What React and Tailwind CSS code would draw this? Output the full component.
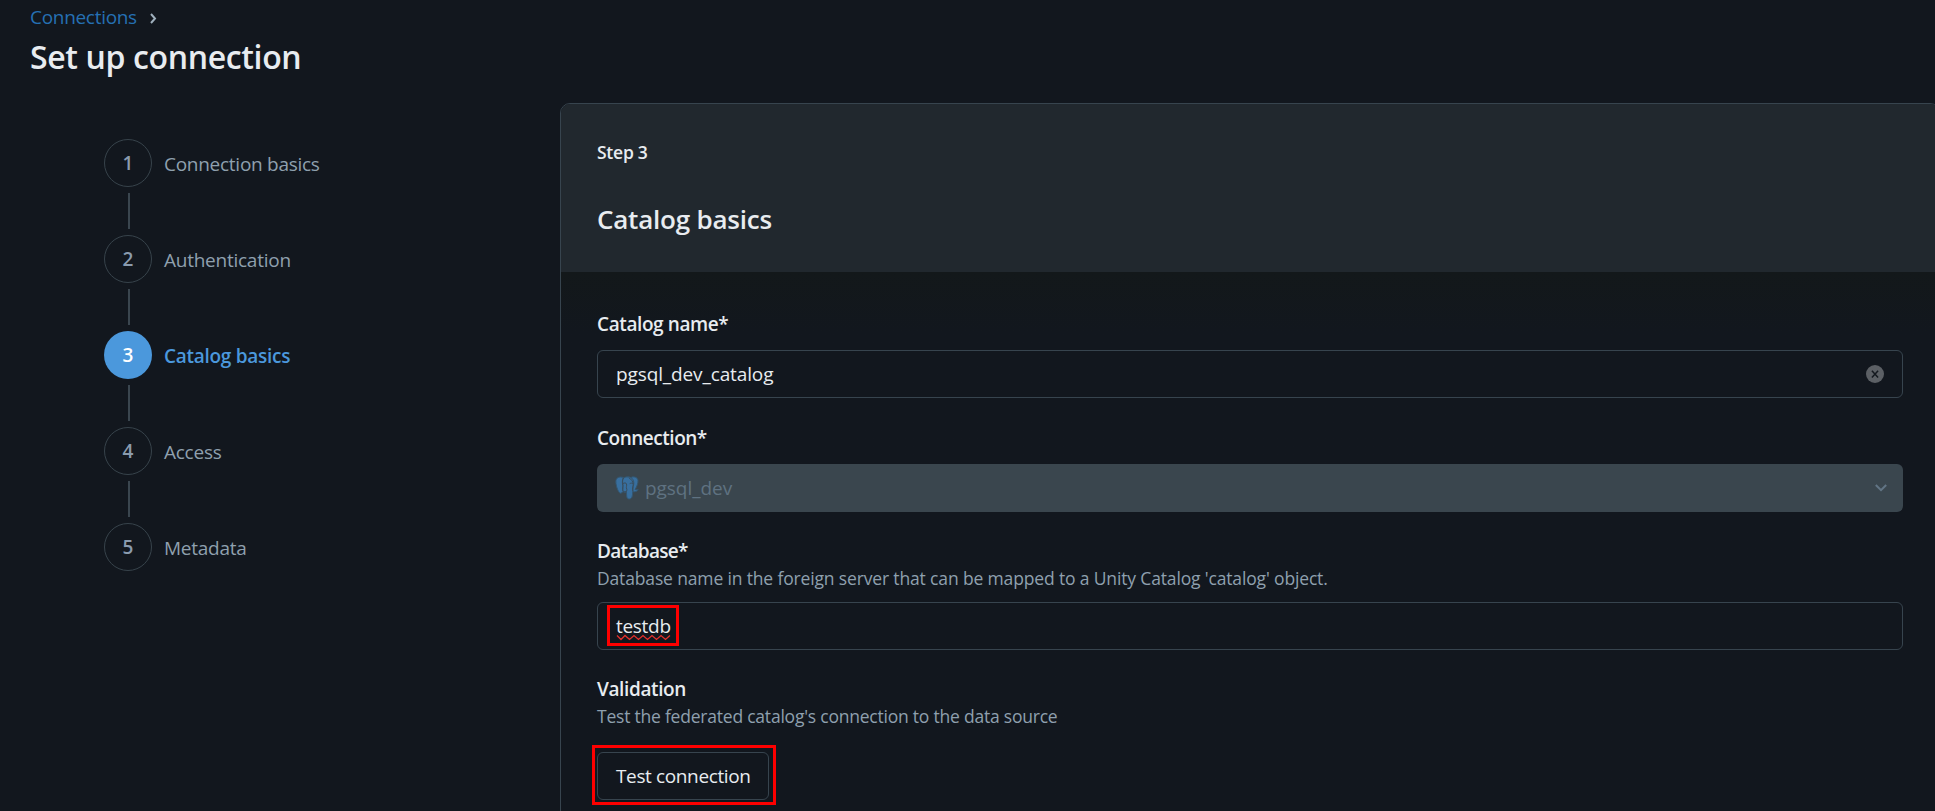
import { Fragment } from "react";

const steps = [
  { label: "Connection basics", tracking: "tracking-[-0.27px]" },
  { label: "Authentication", tracking: "tracking-[-0.25px]" },
  { label: "Catalog basics", tracking: "tracking-[-0.27px]", active: true },
  { label: "Access", tracking: "tracking-[-0.25px]" },
  { label: "Metadata", tracking: "tracking-[-0.26px]" },
];

function Stepper() {
  return (
    <nav className="ml-[74px] mt-[36px] flex w-[456px] shrink-0 flex-col">
      {steps.map((s, i) => (
        <Fragment key={s.label}>
          {i > 0 && <div className="my-1.5 ml-6 h-9 w-0.5 bg-[#3a464f]" />}
          <div className="flex h-12 items-center gap-3">
            <div
              className={
                s.active
                  ? "flex size-12 items-center justify-center rounded-full bg-[#4b98dc] pt-px font-semibold text-white"
                  : "flex size-12 items-center justify-center rounded-full border border-[#37434b] pt-px font-semibold text-[#8a9bae]"
              }
            >
              {i + 1}
            </div>
            <span className={`pt-0.5 ${s.tracking} ${s.active ? "font-semibold text-[#4b98dc]" : "text-[#8fa0ae]"}`}>
              {s.label}
            </span>
          </div>
        </Fragment>
      ))}
    </nav>
  );
}

function ClearIcon() {
  return (
    <svg width="18" height="18" viewBox="0 0 18 18">
      <circle cx="9" cy="9" r="9" fill="#5c6065" />
      <path d="M5.9 5.7l6.2 6.8M12.1 5.7l-6.2 6.8" stroke="#14191f" strokeWidth="1.5" />
    </svg>
  );
}

function ElephantIcon() {
  return (
    <svg width="24" height="24" viewBox="0 0 24 24" strokeLinejoin="round" strokeLinecap="round">
      <g fill="#386f9f" stroke="#34566f" strokeWidth="1">
        <path d="M16.5 1.2C19 .2 22.6 1.4 23 4.2c.3 3-1.300 6.800-3 9.300 1 .5 2.500.1 3.300.1-.8 1.900-3.600 2.700-5.400 2.100z" />
        <path d="M8.300 1.500C5.500.2 1.500.9.9 4.600c-.5 3.200 1.400 9.500 3.400 12 1.200 1.400 2.500.5 3.600-1l1.600.3L11 5z" />
        <path d="M8.300 2.200C10.600.4 15.500.2 17.600 3c1.800 2.500 1.200 5.400.7 7.600-.3 1.700-.5 3.400-.6 5.200-.1 2-.1 4-.8 5.500-1 2.200-4.500 2.600-5.100-.3-.4-1.800-.2-3.400-.3-5.100-1.700.7-3.300.3-3.600-1.200-.3-1.700.3-3.600.1-5.400-.3-2.600-.9-5.300.3-7.100z" />
      </g>
      <g fill="none" stroke="#3a4d5c" strokeWidth="1">
        <path d="M8.300 2.200C6.700 4.600 7.500 7.600 7.800 9.500c.2 1.700-.6 3.500 0 5.100.4 1.100 2.200 1.500 3.500.8" />
        <path d="M8.100 7.500c1.100-.8 3-.9 3.400.4.500 1.700-.6 3.300.2 5.100.4.900.1 1.800-.4 2.400" />
        <path d="M14.200 2c2.500 1.300 4.100 3.900 4 6.900-.1 1.400-.9 2.700-.7 4.100.1.600.5 1 .4 1.700" />
        <path d="M15 7.500c1-.6 2.100-.5 3 0" />
      </g>
    </svg>
  );
}

function PanelHeader() {
  return (
    <header className="h-[168px] rounded-t-[9px] bg-[#21282e] px-9 pt-9">
      <div className="text-[17.5px] leading-6 font-semibold tracking-[-0.25px]">Step 3</div>
      <h2 className="mt-[37px] text-[26px] leading-9 font-semibold tracking-[-0.22px]">Catalog basics</h2>
    </header>
  );
}

function Form() {
  return (
    <div className="bg-linear-to-b from-[#13181a] to-[#12171e] to-[60px] px-9 pt-9">
      <div className="h-[30px] leading-8 font-semibold tracking-[-0.4px]">Catalog name*</div>
      <div className="mt-3 flex h-12 items-center justify-between rounded-md border border-[#37444e] pr-[18px] pl-[18px]">
        <span className="pt-px tracking-[-0.12px]">pgsql_dev_catalog</span>
        <ClearIcon />
      </div>

      <div className="mt-6 h-[30px] leading-8 font-semibold tracking-[-0.48px]">Connection*</div>
      <div className="mt-3 flex h-12 items-center rounded-md bg-[#3a464e] pr-[15px] pl-[18px] text-[#5f7281]">
        <ElephantIcon />
        <span className="ml-1.5 grow tracking-[-0.05px]">pgsql_dev</span>
        <svg width="14" height="10" viewBox="0 0 14 10" fill="none">
          <path d="M1.8 2L7 7.2L12.2 2" stroke="#627585" strokeWidth="2" />
        </svg>
      </div>

      <div className="mt-6 h-[30px] leading-[31px] font-semibold tracking-[-0.68px]">Database*</div>
      <div className="text-[17.5px] leading-6 tracking-[-0.15px] text-[#8fa0ae]">
        Database name in the foreign server that can be mapped to a Unity Catalog 'catalog' object.
      </div>
      <div className="relative mt-3 flex h-12 items-center rounded-md border border-[#37444e] pl-[18px]">
        <span className="tracking-[-0.3px]">testdb</span>
        <svg className="absolute top-[31px] left-[18px]" width="56" height="7" viewBox="0 0 56 7" fill="none">
          <path
            d="M1 1.5L5 5.5L9 1.5L13.5 5.5L18 1.5L22.5 5.5L27 1.5L31.5 5.5L36 1.5L40.5 5.5L45 1.5L49.5 5.5L54 1.5"
            stroke="#e3302c"
            strokeWidth="1.3"
          />
        </svg>
        <div className="absolute top-[2px] left-[9px] h-[41px] w-[72px] border-[3px] border-[#fe0000]" />
      </div>

      <div className="mt-6 h-[30px] leading-[31px] font-semibold tracking-[-0.38px]">Validation</div>
      <div className="text-[17.5px] leading-6 tracking-[-0.22px] text-[#8fa0ae]">
        Test the federated catalog's connection to the data source
      </div>
      <div className="relative mt-6 w-[172px]">
        <button className="flex h-12 w-full items-center rounded-md border border-[#37444e] pl-[18px] tracking-[-0.37px]">
          Test connection
        </button>
        <div className="absolute top-[-7px] left-[-5px] h-[60px] w-[184px] border-[3px] border-[#fe0000]" />
      </div>
    </div>
  );
}

export default function App() {
  return (
    <div className="h-[811px] w-full overflow-hidden bg-[#12171e] font-['Open_Sans',sans-serif] text-[19px] text-[#e8ecf0]">
      <div className="flex h-[103px] flex-col pl-[30px]">
        <div className="flex h-[33px] items-center gap-[13px] pt-[2px]">
          <a className="tracking-[-0.3px] text-[#2570b3]">Connections</a>
          <svg className="mt-0.5" width="7" height="11" viewBox="0 0 7 11" fill="none">
            <path d="M1 1L5 5.5L1 10" stroke="#9fb0bd" strokeWidth="2" />
          </svg>
        </div>
        <h1 className="mt-[2px] text-[32px] leading-[44px] font-semibold tracking-[-0.36px]">Set up connection</h1>
      </div>
      <div className="flex pl-[30px]">
        <Stepper />
        <main className="h-[760px] w-[1380px] shrink-0 rounded-[10px] border border-[#37444e]">
          <PanelHeader />
          <Form />
        </main>
      </div>
    </div>
  );
}
